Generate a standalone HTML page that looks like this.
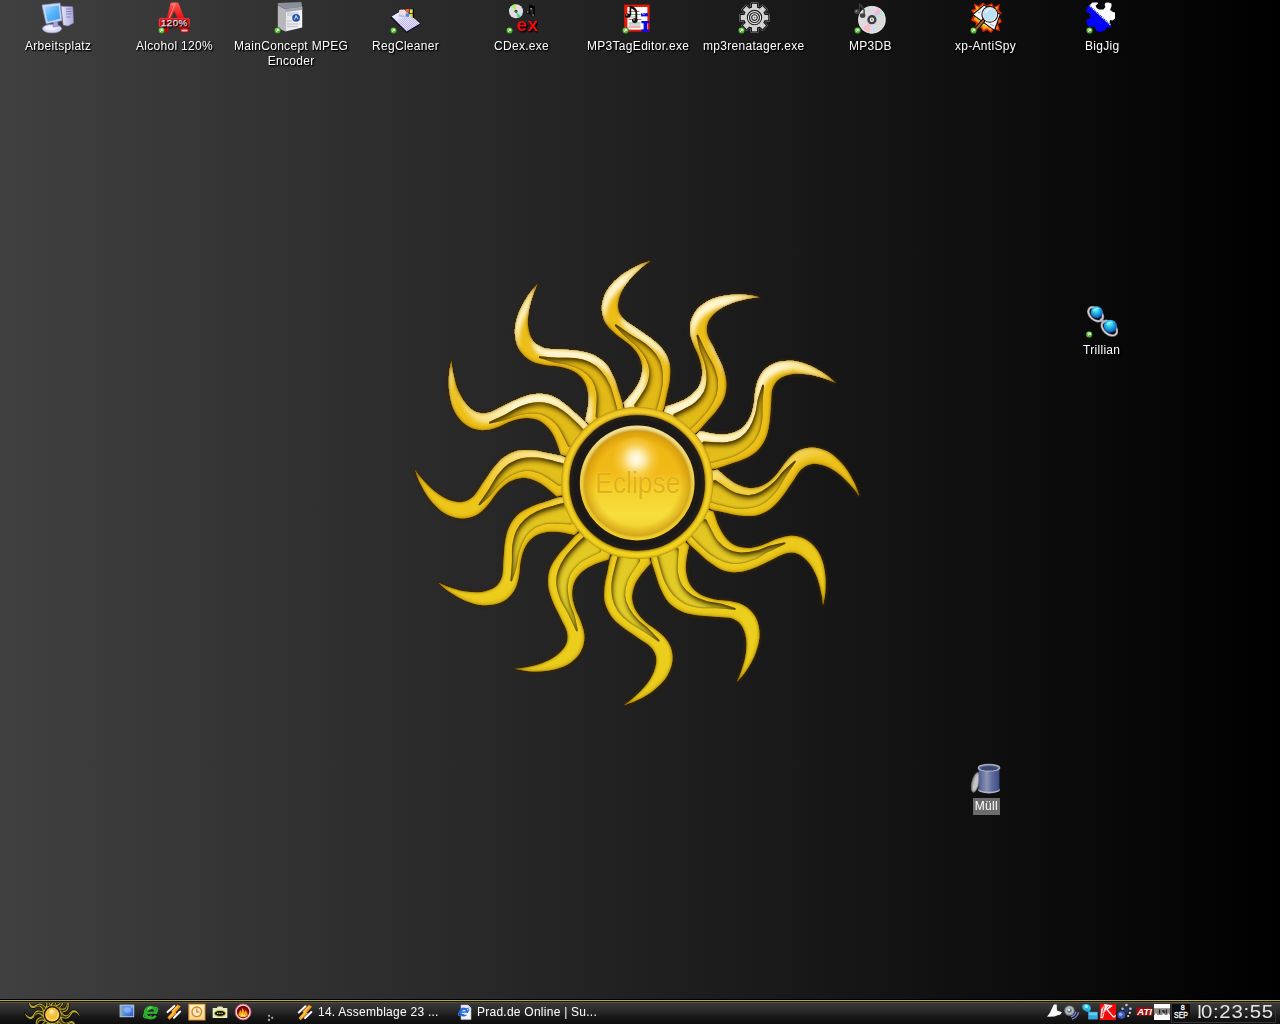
<!DOCTYPE html>
<html lang="de"><head><meta charset="utf-8"><title>Eclipse Desktop</title>
<style>
html,body{margin:0;padding:0;width:1280px;height:1024px;overflow:hidden;background:#000;}
body{position:relative;font-family:"Liberation Sans",sans-serif;font-size:12px;color:#fff;
background:linear-gradient(90deg,#404040 0px,#000 1280px);}
.sun{position:absolute;left:0;top:0;}
.ico{white-space:nowrap;letter-spacing:0.3px;position:absolute;width:116px;text-align:center;line-height:15px;font-size:12px;color:#fff;text-shadow:1px 1px 1px #000,1px 1px 2px #000;}
.ico svg{display:block;margin:0 auto 5px auto;width:32px;height:32px;}
.ico span{display:inline-block;padding:0 2px;will-change:transform;}
.ico.sel span{background:#6c6c6c;padding:1px 1.7px;margin-top:-1px;text-shadow:none;}
#taskbar{position:absolute;left:0;top:999px;width:1280px;height:25px;background:linear-gradient(#3a3840 4px,#313230 8px,#242424 14px,#181818 18px,#0f0f0f 24px);}
#taskbar .l1{position:absolute;left:0;top:0;width:100%;height:1px;background:#000;}
#taskbar .l2{position:absolute;left:0;top:1px;width:100%;height:1px;background:#b3a847;}
#taskbar .l3{position:absolute;left:0;top:2px;width:100%;height:1px;background:#15130a;}
#taskbar .l4{position:absolute;left:0;top:3px;width:100%;height:1px;background:#5a5232;}
.tb{will-change:transform;letter-spacing:0.25px;position:absolute;top:5px;height:16px;font-size:12px;line-height:16px;color:#fff;white-space:nowrap;}
.tb.clock{top:3px;left:1188.8px;font-size:18.5px;line-height:20px;letter-spacing:0.63px;color:#e6e6e6;transform:scaleX(1.1);transform-origin:0 0;}.tb.clock i{font-style:normal;position:relative;left:4px;display:inline-block;clip-path:inset(0 38% 0 41%);}
</style></head><body>
<svg class="sun" width="1280" height="1024" viewBox="0 0 1280 1024">
<defs>
<filter id="glow" x="-20%" y="-20%" width="140%" height="140%"><feGaussianBlur stdDeviation="1.5"/></filter>
<linearGradient id="rayfill" gradientUnits="userSpaceOnUse" x1="0" y1="-222" x2="0" y2="222">
<stop offset="0" stop-color="#f2c41c"/><stop offset="0.45" stop-color="#f3ca1c"/><stop offset="0.7" stop-color="#f2d620"/><stop offset="1" stop-color="#f1db22"/></linearGradient>
<linearGradient id="insetfill" gradientUnits="userSpaceOnUse" x1="0" y1="-160" x2="0" y2="160">
<stop offset="0" stop-color="#e2b412"/><stop offset="0.5" stop-color="#e2c01c"/><stop offset="1" stop-color="#e4d42c"/></linearGradient>
<radialGradient id="hlgrad" gradientUnits="userSpaceOnUse" cx="0" cy="0" r="1" gradientTransform="translate(0 -116) scale(250 158)">
<stop offset="0" stop-color="#fff7d8" stop-opacity="1"/><stop offset="0.55" stop-color="#fff6d2" stop-opacity="1"/><stop offset="0.78" stop-color="#fff0b4" stop-opacity="0.55"/><stop offset="1" stop-color="#fff0b0" stop-opacity="0"/></radialGradient>
<filter id="edge" x="-10%" y="-10%" width="120%" height="120%" color-interpolation-filters="sRGB">
<feComponentTransfer in="SourceAlpha" result="inv"><feFuncA type="table" tableValues="1 0"/></feComponentTransfer>
<feGaussianBlur in="inv" stdDeviation="1.7" result="ib"/>
<feFlood flood-color="#6e4a00" flood-opacity="1"/><feComposite in2="ib" operator="in" result="sh"/>
<feComposite in="sh" in2="SourceAlpha" operator="in" result="sh2"/>
<feMerge><feMergeNode in="SourceGraphic"/><feMergeNode in="sh2"/></feMerge>
</filter>
<filter id="hl" x="-10%" y="-10%" width="120%" height="120%" color-interpolation-filters="sRGB">
<feComponentTransfer in="SourceAlpha" result="th"><feFuncA type="discrete" tableValues="0 1 1 1 1 1 1 1 1 1 1 1 1 1 1 1 1 1 1 1 1 1 1 1 1 1 1 1 1 1 1 1 1 1 1 1 1 1 1 1"/></feComponentTransfer>
<feMorphology in="th" operator="erode" radius="1" result="er"/>
<feOffset in="er" dx="2.5" dy="8.5" result="sh"/>
<feComposite in="SourceGraphic" in2="sh" operator="out" result="e"/>
<feGaussianBlur in="e" stdDeviation="2.3" result="eb"/>
<feComposite in="eb" in2="th" operator="in"/>
</filter>
<filter id="sd" x="-10%" y="-10%" width="120%" height="120%" color-interpolation-filters="sRGB">
<feMorphology in="SourceAlpha" operator="erode" radius="1" result="er"/>
<feOffset in="er" dx="-0.6" dy="-2.6" result="sh"/>
<feComposite in="SourceGraphic" in2="sh" operator="out" result="e"/>
<feGaussianBlur in="e" stdDeviation="1.3" result="eb"/>
<feComposite in="eb" in2="SourceAlpha" operator="in"/>
</filter>
<filter id="inset" x="-10%" y="-10%" width="120%" height="120%" color-interpolation-filters="sRGB">
<feComponentTransfer in="SourceAlpha" result="inv"><feFuncA type="table" tableValues="1 0"/></feComponentTransfer>
<feGaussianBlur in="inv" stdDeviation="2.8" result="ib"/>
<feOffset in="ib" dx="1.2" dy="3" result="io"/>
<feFlood flood-color="#3c2a00" flood-opacity="1"/><feComposite in2="io" operator="in" result="sh"/>
<feComposite in="sh" in2="SourceAlpha" operator="in" result="sh2"/>
<feGaussianBlur in="inv" stdDeviation="1.2" result="ib2"/>
<feFlood flood-color="#5a4000" flood-opacity="0.8"/><feComposite in2="ib2" operator="in" result="s3"/>
<feComposite in="s3" in2="SourceAlpha" operator="in" result="s4"/>
<feMerge><feMergeNode in="SourceGraphic"/><feMergeNode in="sh2"/><feMergeNode in="s4"/></feMerge>
</filter>
<linearGradient id="ball" x1="0" y1="-52" x2="0" y2="52" gradientUnits="userSpaceOnUse">
<stop offset="0" stop-color="#efb414"/><stop offset="0.4" stop-color="#f1ba16"/><stop offset="0.56" stop-color="#f5d02a"/><stop offset="0.8" stop-color="#f7de3c"/><stop offset="1" stop-color="#f2d030"/></linearGradient>
<radialGradient id="ballsh" cx="0" cy="0" r="52.6" gradientUnits="userSpaceOnUse"><stop offset="0.8" stop-color="#c88a08" stop-opacity="0"/><stop offset="1" stop-color="#c08408" stop-opacity="0.55"/></radialGradient>
<radialGradient id="spec" cx="-1" cy="-24" r="25" gradientUnits="userSpaceOnUse">
<stop offset="0" stop-color="#fffdf0" stop-opacity="1"/><stop offset="0.3" stop-color="#fff6d0" stop-opacity="0.85"/><stop offset="0.65" stop-color="#ffe890" stop-opacity="0.35"/><stop offset="1" stop-color="#ffd84a" stop-opacity="0"/></radialGradient>
<linearGradient id="ringg" x1="0" y1="-76" x2="0" y2="76" gradientUnits="userSpaceOnUse"><stop offset="0" stop-color="#f4cc28"/><stop offset="1" stop-color="#f2d41e"/></linearGradient>
<linearGradient id="rimg" x1="0" y1="-58" x2="0" y2="58" gradientUnits="userSpaceOnUse"><stop offset="0" stop-color="#f2e2a0"/><stop offset="0.35" stop-color="#f0d45c"/><stop offset="0.7" stop-color="#eec82c"/><stop offset="1" stop-color="#f0d030"/></linearGradient>

<path id="r0" d="M-13.6 -80.3C-11.9 -82.3 -6.2 -88.3 -3.5 -92.1C-0.7 -95.9 1.4 -99.1 2.8 -103.0C4.2 -106.9 5.4 -111.3 5.1 -115.5C4.8 -119.7 3.4 -124.1 1.2 -128.0C-1.0 -131.9 -4.5 -135.5 -8.1 -138.9C-11.7 -142.3 -17.0 -145.2 -20.6 -148.3C-24.2 -151.4 -27.6 -154.3 -30.0 -157.7C-32.4 -161.1 -33.9 -164.7 -34.7 -168.6C-35.5 -172.5 -35.7 -176.7 -34.7 -181.1C-33.7 -185.5 -31.6 -190.8 -28.4 -195.2C-25.3 -199.6 -20.6 -204.0 -15.9 -207.7C-11.3 -211.3 -5.1 -214.7 -0.3 -217.1C4.5 -219.5 10.8 -221.3 13.0 -222.1C11.6 -221.0 7.9 -218.7 4.4 -215.5C0.9 -212.3 -4.6 -207.4 -8.1 -203.0C-11.6 -198.6 -14.9 -193.6 -16.7 -188.9C-18.5 -184.2 -19.6 -179.1 -19.1 -174.9C-18.6 -170.7 -16.7 -167.3 -13.6 -163.9C-10.5 -160.5 -5.1 -158.0 -0.3 -154.6C4.5 -151.2 10.9 -147.2 15.3 -143.6C19.7 -139.9 23.3 -136.9 26.2 -132.7C29.1 -128.5 31.4 -123.5 32.5 -118.6C33.5 -113.6 33.0 -108.2 32.5 -103.0C32.0 -97.8 30.3 -92.0 29.4 -87.4C28.5 -82.8 27.4 -77.6 27.0 -75.6L22.0 -64.0 L-10.0 -66.0 Z"/>
<path id="r1" d="M28.4 -76.3C30.8 -77.2 38.8 -79.6 43.1 -81.5C47.3 -83.4 50.7 -85.1 53.9 -87.8C57.1 -90.5 60.3 -93.7 62.2 -97.5C64.0 -101.2 65.0 -105.8 65.0 -110.3C65.1 -114.7 63.9 -119.6 62.4 -124.3C61.0 -129.1 57.9 -134.2 56.3 -138.7C54.7 -143.3 53.2 -147.5 52.9 -151.6C52.5 -155.7 53.0 -159.6 54.2 -163.4C55.5 -167.1 57.4 -170.9 60.5 -174.2C63.6 -177.5 68.0 -181.0 73.0 -183.3C77.9 -185.6 84.1 -187.0 90.0 -187.8C95.9 -188.7 102.9 -188.5 108.3 -188.2C113.7 -187.8 120.0 -186.2 122.3 -185.8C120.5 -185.6 116.2 -185.4 111.6 -184.4C106.9 -183.4 99.7 -181.9 94.5 -179.9C89.2 -177.8 83.9 -175.1 80.0 -171.9C76.1 -168.8 72.5 -164.9 70.9 -161.0C69.3 -157.2 69.2 -153.2 70.2 -148.7C71.2 -144.2 74.6 -139.4 77.0 -134.0C79.5 -128.7 83.1 -122.1 85.1 -116.7C87.1 -111.3 88.6 -106.9 89.0 -101.8C89.4 -96.8 89.0 -91.3 87.4 -86.5C85.9 -81.6 82.7 -77.2 79.6 -73.0C76.6 -68.7 72.2 -64.5 69.2 -61.0C66.1 -57.5 62.5 -53.5 61.2 -52.0L51.1 -44.4 L24.3 -62.2 Z"/>
<path id="r2" d="M62.7 -51.9C65.3 -51.4 73.4 -49.5 78.0 -49.0C82.7 -48.6 86.5 -48.4 90.6 -49.1C94.7 -49.8 99.1 -51.0 102.6 -53.3C106.1 -55.6 109.2 -59.1 111.5 -63.0C113.7 -66.8 115.1 -71.6 116.2 -76.5C117.4 -81.3 117.2 -87.3 118.1 -92.0C119.0 -96.7 119.8 -101.1 121.6 -104.8C123.3 -108.6 125.7 -111.7 128.7 -114.4C131.6 -117.0 135.1 -119.3 139.5 -120.6C143.8 -121.9 149.4 -122.7 154.8 -122.2C160.2 -121.7 166.4 -119.9 171.9 -117.7C177.4 -115.4 183.4 -111.8 187.9 -108.8C192.4 -105.8 197.0 -101.3 198.8 -99.8C197.2 -100.5 193.3 -102.5 188.8 -103.9C184.3 -105.4 177.4 -107.7 171.8 -108.5C166.2 -109.3 160.2 -109.7 155.2 -108.9C150.3 -108.2 145.3 -106.5 141.9 -104.0C138.6 -101.5 136.5 -98.1 135.1 -93.7C133.8 -89.3 134.3 -83.4 133.7 -77.6C133.2 -71.7 133.0 -64.2 132.0 -58.5C131.1 -52.9 130.2 -48.2 128.0 -43.7C125.8 -39.1 122.7 -34.5 119.0 -31.2C115.2 -27.8 110.2 -25.5 105.5 -23.4C100.7 -21.2 94.8 -19.7 90.4 -18.2C86.0 -16.7 80.9 -15.1 79.0 -14.4L66.4 -12.9 L52.2 -41.7 Z"/>
<path id="r3" d="M80.3 -13.6C82.3 -11.9 88.3 -6.2 92.1 -3.5C95.9 -0.7 99.1 1.4 103.0 2.8C106.9 4.2 111.3 5.4 115.5 5.1C119.7 4.8 124.1 3.4 128.0 1.2C131.9 -1.0 135.5 -4.5 138.9 -8.1C142.3 -11.7 145.2 -17.0 148.3 -20.6C151.4 -24.3 154.3 -27.7 157.7 -30.0C161.1 -32.4 164.7 -33.9 168.6 -34.7C172.5 -35.5 176.7 -35.7 181.1 -34.7C185.5 -33.7 190.8 -31.6 195.2 -28.5C199.6 -25.3 204.0 -20.6 207.7 -16.0C211.3 -11.3 214.7 -5.1 217.1 -0.3C219.5 4.5 221.3 10.8 222.1 13.0C221.0 11.6 218.7 7.9 215.5 4.4C212.3 0.9 207.4 -4.6 203.0 -8.1C198.6 -11.6 193.6 -14.9 188.9 -16.7C184.2 -18.5 179.1 -19.6 174.9 -19.1C170.7 -18.6 167.3 -16.7 163.9 -13.6C160.5 -10.5 158.0 -5.1 154.6 -0.3C151.2 4.5 147.2 10.9 143.6 15.3C139.9 19.7 136.9 23.3 132.7 26.2C128.5 29.1 123.5 31.4 118.6 32.5C113.6 33.5 108.2 33.0 103.0 32.5C97.8 32.0 92.0 30.3 87.4 29.4C82.8 28.5 77.6 27.4 75.6 27.0L64.0 22.0 L66.0 -10.0 Z"/>
<path id="r4" d="M76.3 28.4C77.2 30.8 79.6 38.8 81.5 43.1C83.4 47.3 85.1 50.7 87.8 53.9C90.5 57.1 93.7 60.3 97.5 62.2C101.2 64.0 105.8 65.0 110.3 65.0C114.7 65.1 119.6 63.9 124.3 62.4C129.1 61.0 134.2 57.9 138.7 56.3C143.3 54.7 147.5 53.2 151.6 52.9C155.7 52.5 159.6 53.0 163.4 54.2C167.1 55.5 170.9 57.4 174.2 60.5C177.5 63.6 181.0 68.0 183.3 73.0C185.6 77.9 187.0 84.1 187.8 90.0C188.7 95.9 188.5 102.9 188.2 108.3C187.8 113.7 186.2 120.0 185.8 122.3C185.6 120.5 185.4 116.2 184.4 111.6C183.4 106.9 181.9 99.7 179.9 94.5C177.8 89.2 175.1 83.9 171.9 80.0C168.8 76.1 164.9 72.5 161.0 70.9C157.2 69.3 153.2 69.2 148.7 70.2C144.2 71.2 139.4 74.6 134.0 77.0C128.7 79.5 122.1 83.1 116.7 85.1C111.3 87.1 106.9 88.6 101.8 89.0C96.8 89.4 91.3 89.0 86.5 87.4C81.6 85.9 77.2 82.7 73.0 79.6C68.7 76.6 64.5 72.2 61.0 69.2C57.5 66.1 53.5 62.5 52.0 61.2L44.4 51.1 L62.2 24.3 Z"/>
<path id="r5" d="M51.9 62.7C51.4 65.3 49.5 73.4 49.0 78.0C48.6 82.7 48.4 86.5 49.1 90.6C49.8 94.7 51.0 99.1 53.3 102.6C55.6 106.1 59.1 109.2 63.0 111.5C66.8 113.7 71.6 115.1 76.5 116.2C81.3 117.4 87.3 117.2 92.0 118.1C96.7 119.0 101.1 119.8 104.8 121.6C108.6 123.3 111.7 125.7 114.4 128.7C117.0 131.6 119.3 135.1 120.6 139.5C121.9 143.8 122.7 149.4 122.2 154.8C121.7 160.2 119.9 166.4 117.7 171.9C115.4 177.4 111.8 183.4 108.8 187.9C105.8 192.4 101.3 197.0 99.8 198.8C100.5 197.2 102.5 193.3 103.9 188.8C105.4 184.3 107.7 177.4 108.5 171.8C109.3 166.2 109.7 160.2 108.9 155.2C108.2 150.3 106.5 145.3 104.0 141.9C101.5 138.6 98.1 136.5 93.7 135.1C89.3 133.8 83.4 134.3 77.6 133.7C71.7 133.2 64.2 133.0 58.5 132.0C52.9 131.1 48.2 130.2 43.7 128.0C39.1 125.8 34.5 122.7 31.2 119.0C27.8 115.2 25.5 110.2 23.4 105.5C21.2 100.7 19.7 94.8 18.2 90.4C16.7 86.0 15.1 80.9 14.4 79.0L12.9 66.4 L41.7 52.2 Z"/>
<path id="r6" d="M13.6 80.3C11.9 82.3 6.2 88.3 3.5 92.1C0.7 95.9 -1.4 99.1 -2.8 103.0C-4.2 106.9 -5.4 111.3 -5.1 115.5C-4.8 119.7 -3.4 124.1 -1.2 128.0C1.0 131.9 4.5 135.5 8.1 138.9C11.7 142.3 17.0 145.2 20.6 148.3C24.3 151.4 27.7 154.3 30.0 157.7C32.4 161.1 33.9 164.7 34.7 168.6C35.5 172.5 35.7 176.7 34.7 181.1C33.7 185.5 31.6 190.8 28.5 195.2C25.3 199.6 20.6 204.0 16.0 207.7C11.3 211.3 5.1 214.7 0.3 217.1C-4.5 219.5 -10.8 221.3 -13.0 222.1C-11.6 221.0 -7.9 218.7 -4.4 215.5C-0.9 212.3 4.6 207.4 8.1 203.0C11.6 198.6 14.9 193.6 16.7 188.9C18.5 184.2 19.6 179.1 19.1 174.9C18.6 170.7 16.7 167.3 13.6 163.9C10.5 160.5 5.1 158.0 0.3 154.6C-4.5 151.2 -10.9 147.2 -15.3 143.6C-19.7 139.9 -23.3 136.9 -26.2 132.7C-29.1 128.5 -31.4 123.5 -32.5 118.6C-33.5 113.6 -33.0 108.2 -32.5 103.0C-32.0 97.8 -30.3 92.0 -29.4 87.4C-28.5 82.8 -27.4 77.6 -27.0 75.6L-22.0 64.0 L10.0 66.0 Z"/>
<path id="r7" d="M-28.4 76.3C-30.8 77.2 -38.8 79.6 -43.1 81.5C-47.3 83.4 -50.7 85.1 -53.9 87.8C-57.1 90.5 -60.3 93.7 -62.2 97.5C-64.0 101.2 -65.0 105.8 -65.0 110.3C-65.1 114.7 -63.9 119.6 -62.4 124.3C-61.0 129.1 -57.9 134.2 -56.3 138.7C-54.7 143.3 -53.2 147.5 -52.9 151.6C-52.5 155.7 -53.0 159.6 -54.2 163.4C-55.5 167.1 -57.4 170.9 -60.5 174.2C-63.6 177.5 -68.0 181.0 -73.0 183.3C-77.9 185.6 -84.1 187.0 -90.0 187.8C-95.9 188.7 -102.9 188.5 -108.3 188.2C-113.7 187.8 -120.0 186.2 -122.3 185.8C-120.5 185.6 -116.2 185.4 -111.6 184.4C-106.9 183.4 -99.7 181.9 -94.5 179.9C-89.2 177.8 -83.9 175.1 -80.0 171.9C-76.1 168.8 -72.5 164.9 -70.9 161.0C-69.3 157.2 -69.2 153.2 -70.2 148.7C-71.2 144.2 -74.6 139.4 -77.0 134.0C-79.5 128.7 -83.1 122.1 -85.1 116.7C-87.1 111.3 -88.6 106.9 -89.0 101.8C-89.4 96.8 -89.0 91.3 -87.4 86.5C-85.9 81.6 -82.7 77.2 -79.6 73.0C-76.6 68.7 -72.2 64.5 -69.2 61.0C-66.1 57.5 -62.5 53.5 -61.2 52.0L-51.1 44.4 L-24.3 62.2 Z"/>
<path id="r8" d="M-62.7 51.9C-65.3 51.4 -73.4 49.5 -78.0 49.0C-82.7 48.6 -86.5 48.4 -90.6 49.1C-94.7 49.8 -99.1 51.0 -102.6 53.3C-106.1 55.6 -109.2 59.1 -111.5 63.0C-113.7 66.8 -115.1 71.6 -116.2 76.5C-117.4 81.3 -117.2 87.3 -118.1 92.0C-119.0 96.7 -119.8 101.1 -121.6 104.8C-123.3 108.6 -125.7 111.7 -128.7 114.4C-131.6 117.0 -135.1 119.3 -139.5 120.6C-143.8 121.9 -149.4 122.7 -154.8 122.2C-160.2 121.7 -166.4 119.9 -171.9 117.7C-177.4 115.4 -183.4 111.8 -187.9 108.8C-192.4 105.8 -197.0 101.3 -198.8 99.8C-197.2 100.5 -193.3 102.5 -188.8 103.9C-184.3 105.4 -177.4 107.7 -171.8 108.5C-166.2 109.3 -160.2 109.7 -155.2 108.9C-150.3 108.2 -145.3 106.5 -141.9 104.0C-138.6 101.5 -136.5 98.1 -135.1 93.7C-133.8 89.3 -134.3 83.4 -133.7 77.6C-133.2 71.7 -133.0 64.2 -132.0 58.5C-131.1 52.9 -130.2 48.2 -128.0 43.7C-125.8 39.1 -122.7 34.5 -119.0 31.2C-115.2 27.8 -110.2 25.5 -105.5 23.4C-100.7 21.2 -94.8 19.7 -90.4 18.2C-86.0 16.7 -80.9 15.1 -79.0 14.4L-66.4 12.9 L-52.2 41.7 Z"/>
<path id="r9" d="M-80.3 13.6C-82.3 11.9 -88.3 6.2 -92.1 3.5C-95.9 0.7 -99.1 -1.4 -103.0 -2.8C-106.9 -4.2 -111.3 -5.4 -115.5 -5.1C-119.7 -4.8 -124.1 -3.4 -128.0 -1.2C-131.9 1.0 -135.5 4.5 -138.9 8.1C-142.3 11.7 -145.2 17.0 -148.3 20.6C-151.4 24.3 -154.3 27.7 -157.7 30.0C-161.1 32.4 -164.7 33.9 -168.6 34.7C-172.5 35.5 -176.7 35.7 -181.1 34.7C-185.5 33.7 -190.8 31.6 -195.2 28.5C-199.6 25.3 -204.0 20.6 -207.7 16.0C-211.3 11.3 -214.7 5.1 -217.1 0.3C-219.5 -4.5 -221.3 -10.8 -222.1 -13.0C-221.0 -11.6 -218.7 -7.9 -215.5 -4.4C-212.3 -0.9 -207.4 4.6 -203.0 8.1C-198.6 11.6 -193.6 14.9 -188.9 16.7C-184.2 18.5 -179.1 19.6 -174.9 19.1C-170.7 18.6 -167.3 16.7 -163.9 13.6C-160.5 10.5 -158.0 5.1 -154.6 0.3C-151.2 -4.5 -147.2 -10.9 -143.6 -15.3C-139.9 -19.7 -136.9 -23.3 -132.7 -26.2C-128.5 -29.1 -123.5 -31.4 -118.6 -32.5C-113.6 -33.5 -108.2 -33.0 -103.0 -32.5C-97.8 -32.0 -92.0 -30.3 -87.4 -29.4C-82.8 -28.5 -77.6 -27.4 -75.6 -27.0L-64.0 -22.0 L-66.0 10.0 Z"/>
<path id="r10" d="M-76.3 -28.4C-77.2 -30.8 -79.6 -38.8 -81.5 -43.1C-83.4 -47.3 -85.1 -50.7 -87.8 -53.9C-90.5 -57.1 -93.7 -60.3 -97.5 -62.2C-101.2 -64.0 -105.8 -65.0 -110.3 -65.0C-114.7 -65.1 -119.6 -63.9 -124.3 -62.4C-129.1 -61.0 -134.2 -57.9 -138.7 -56.3C-143.3 -54.7 -147.5 -53.2 -151.6 -52.9C-155.7 -52.5 -159.6 -53.0 -163.4 -54.2C-167.1 -55.5 -170.9 -57.4 -174.2 -60.5C-177.5 -63.6 -181.0 -68.0 -183.3 -73.0C-185.6 -77.9 -187.0 -84.1 -187.8 -90.0C-188.7 -95.9 -188.5 -102.9 -188.2 -108.3C-187.8 -113.7 -186.2 -120.0 -185.8 -122.3C-185.6 -120.5 -185.4 -116.2 -184.4 -111.6C-183.4 -106.9 -181.9 -99.7 -179.9 -94.5C-177.8 -89.2 -175.1 -83.9 -171.9 -80.0C-168.8 -76.1 -164.9 -72.5 -161.0 -70.9C-157.2 -69.3 -153.2 -69.2 -148.7 -70.2C-144.2 -71.2 -139.4 -74.6 -134.0 -77.0C-128.7 -79.5 -122.1 -83.1 -116.7 -85.1C-111.3 -87.1 -106.9 -88.6 -101.8 -89.0C-96.8 -89.4 -91.3 -89.0 -86.5 -87.4C-81.6 -85.9 -77.2 -82.7 -73.0 -79.6C-68.7 -76.6 -64.5 -72.2 -61.0 -69.2C-57.5 -66.1 -53.5 -62.5 -52.0 -61.2L-44.4 -51.1 L-62.2 -24.3 Z"/>
<path id="r11" d="M-51.9 -62.7C-51.4 -65.3 -49.5 -73.4 -49.0 -78.0C-48.6 -82.7 -48.4 -86.5 -49.1 -90.6C-49.8 -94.7 -51.0 -99.1 -53.3 -102.6C-55.6 -106.1 -59.1 -109.2 -63.0 -111.5C-66.8 -113.7 -71.6 -115.1 -76.5 -116.2C-81.3 -117.4 -87.3 -117.2 -92.0 -118.1C-96.7 -119.0 -101.1 -119.8 -104.8 -121.6C-108.6 -123.3 -111.7 -125.7 -114.4 -128.7C-117.0 -131.6 -119.3 -135.1 -120.6 -139.5C-121.9 -143.8 -122.7 -149.4 -122.2 -154.8C-121.7 -160.2 -119.9 -166.4 -117.7 -171.9C-115.4 -177.4 -111.8 -183.4 -108.8 -187.9C-105.8 -192.4 -101.3 -197.0 -99.8 -198.8C-100.5 -197.2 -102.5 -193.3 -103.9 -188.8C-105.4 -184.3 -107.7 -177.4 -108.5 -171.8C-109.3 -166.2 -109.7 -160.2 -108.9 -155.2C-108.2 -150.3 -106.5 -145.3 -104.0 -141.9C-101.5 -138.6 -98.1 -136.5 -93.7 -135.1C-89.3 -133.8 -83.4 -134.3 -77.6 -133.7C-71.7 -133.2 -64.2 -133.0 -58.5 -132.0C-52.9 -131.1 -48.2 -130.2 -43.7 -128.0C-39.1 -125.8 -34.5 -122.7 -31.2 -119.0C-27.8 -115.2 -25.5 -110.2 -23.4 -105.5C-21.2 -100.7 -19.7 -94.8 -18.2 -90.4C-16.7 -86.0 -15.1 -80.9 -14.4 -79.0L-12.9 -66.4 L-41.7 -52.2 Z"/>
<g id="rays"><use href="#r0"/><use href="#r1"/><use href="#r2"/><use href="#r3"/><use href="#r4"/><use href="#r5"/><use href="#r6"/><use href="#r7"/><use href="#r8"/><use href="#r9"/><use href="#r10"/><use href="#r11"/></g>
<g id="insets"><path d="M-1.9 -78.0C-0.8 -79.6 2.3 -84.0 4.4 -87.4C6.5 -90.8 9.2 -94.1 10.6 -98.3C12.0 -102.5 13.2 -108.0 13.0 -112.4C12.7 -116.8 11.3 -120.7 9.1 -124.9C6.8 -129.1 3.1 -133.8 -0.3 -137.4C-3.7 -141.0 -7.8 -143.4 -11.3 -146.8C-14.8 -150.1 -19.7 -155.9 -21.4 -157.7C-18.9 -156.0 -11.4 -150.6 -6.6 -147.5C-1.8 -144.4 3.3 -142.2 7.5 -138.9C11.7 -135.7 15.7 -131.9 18.4 -128.0C21.1 -124.1 22.8 -120.2 23.9 -115.5C24.9 -110.8 25.1 -105.1 24.7 -99.9C24.3 -94.7 22.5 -88.3 21.6 -84.2C20.6 -80.2 19.6 -77.0 19.2 -75.6L16.0 -66.0 L0.0 -68.0 Z"/><path d="M37.4 -68.5C39.0 -69.3 44.0 -71.6 47.5 -73.5C51.0 -75.4 55.0 -76.9 58.3 -79.8C61.6 -82.7 65.4 -86.9 67.4 -90.9C69.4 -94.8 70.1 -98.9 70.3 -103.6C70.5 -108.4 69.6 -114.3 68.4 -119.1C67.3 -124.0 64.9 -128.1 63.6 -132.7C62.2 -137.4 60.9 -144.9 60.3 -147.3C61.6 -144.6 65.4 -136.2 68.0 -131.0C70.6 -125.9 74.0 -121.4 75.9 -116.5C77.9 -111.6 79.5 -106.4 79.9 -101.7C80.4 -96.9 79.9 -92.7 78.4 -88.1C77.0 -83.5 74.3 -78.5 71.3 -74.2C68.4 -69.9 63.6 -65.2 60.8 -62.2C58.0 -59.1 55.5 -56.9 54.4 -55.9L46.9 -49.2 L34.0 -58.9 Z"/><path d="M66.6 -40.6C68.5 -40.5 73.9 -40.0 77.9 -39.9C81.9 -39.8 86.1 -39.1 90.4 -40.0C94.8 -40.8 100.1 -42.5 103.8 -45.0C107.5 -47.4 110.2 -50.6 112.7 -54.6C115.2 -58.6 117.4 -64.2 118.8 -69.0C120.3 -73.7 120.3 -78.4 121.4 -83.2C122.6 -87.9 125.1 -95.0 125.9 -97.4C125.6 -94.4 124.7 -85.2 124.4 -79.5C124.1 -73.7 124.8 -68.2 124.0 -63.0C123.3 -57.7 122.1 -52.4 120.1 -48.1C118.0 -43.7 115.5 -40.3 112.0 -37.1C108.4 -33.8 103.6 -30.8 98.9 -28.6C94.2 -26.3 87.7 -24.7 83.7 -23.5C79.8 -22.2 76.5 -21.6 75.1 -21.2L65.2 -19.1 L58.9 -34.0 Z"/><path d="M78.0 -1.9C79.6 -0.9 84.0 2.3 87.4 4.4C90.8 6.5 94.1 9.2 98.3 10.6C102.5 12.0 108.0 13.2 112.4 13.0C116.8 12.7 120.7 11.3 124.9 9.0C129.1 6.8 133.8 3.1 137.4 -0.3C141.0 -3.7 143.4 -7.8 146.8 -11.3C150.1 -14.8 155.9 -19.7 157.7 -21.4C156.0 -18.9 150.6 -11.4 147.5 -6.6C144.4 -1.8 142.2 3.3 138.9 7.5C135.7 11.7 131.9 15.7 128.0 18.4C124.1 21.1 120.2 22.8 115.5 23.9C110.8 24.9 105.1 25.1 99.9 24.7C94.7 24.3 88.3 22.5 84.2 21.5C80.2 20.6 77.0 19.6 75.6 19.2L66.0 16.0 L68.0 -0.0 Z"/><path d="M68.5 37.4C69.3 39.0 71.6 44.0 73.5 47.5C75.4 51.0 76.9 55.0 79.8 58.3C82.7 61.6 86.9 65.4 90.9 67.4C94.8 69.4 98.9 70.1 103.6 70.3C108.4 70.5 114.3 69.6 119.1 68.4C124.0 67.3 128.1 64.9 132.7 63.6C137.4 62.2 144.9 60.9 147.3 60.3C144.6 61.6 136.2 65.4 131.0 68.0C125.9 70.6 121.4 74.0 116.5 75.9C111.6 77.9 106.4 79.5 101.7 79.9C96.9 80.4 92.7 79.9 88.1 78.4C83.5 77.0 78.5 74.3 74.2 71.3C69.9 68.4 65.2 63.6 62.2 60.8C59.1 58.0 56.9 55.5 55.9 54.4L49.2 46.9 L58.9 34.0 Z"/><path d="M40.6 66.6C40.5 68.5 40.0 73.9 39.9 77.9C39.8 81.9 39.1 86.1 40.0 90.4C40.8 94.8 42.5 100.1 45.0 103.8C47.4 107.5 50.6 110.2 54.6 112.7C58.6 115.2 64.2 117.4 69.0 118.8C73.7 120.3 78.4 120.3 83.2 121.4C87.9 122.6 95.0 125.1 97.4 125.9C94.4 125.6 85.2 124.7 79.5 124.4C73.7 124.1 68.2 124.8 63.0 124.0C57.7 123.3 52.4 122.1 48.1 120.1C43.7 118.0 40.3 115.5 37.1 112.0C33.8 108.4 30.8 103.6 28.6 98.9C26.3 94.2 24.7 87.7 23.5 83.7C22.2 79.8 21.6 76.5 21.2 75.1L19.1 65.2 L34.0 58.9 Z"/><path d="M1.9 78.0C0.9 79.6 -2.3 84.0 -4.4 87.4C-6.5 90.8 -9.2 94.1 -10.6 98.3C-12.0 102.5 -13.2 108.0 -13.0 112.4C-12.7 116.8 -11.3 120.7 -9.0 124.9C-6.8 129.1 -3.1 133.8 0.3 137.4C3.7 141.0 7.8 143.4 11.3 146.8C14.8 150.1 19.7 155.9 21.4 157.7C18.9 156.0 11.4 150.6 6.6 147.5C1.8 144.4 -3.3 142.2 -7.5 138.9C-11.7 135.7 -15.7 131.9 -18.4 128.0C-21.1 124.1 -22.8 120.2 -23.9 115.5C-24.9 110.8 -25.1 105.1 -24.7 99.9C-24.3 94.7 -22.5 88.3 -21.5 84.2C-20.6 80.2 -19.6 77.0 -19.2 75.6L-16.0 66.0 L0.0 68.0 Z"/><path d="M-37.4 68.5C-39.0 69.3 -44.0 71.6 -47.5 73.5C-51.0 75.4 -55.0 76.9 -58.3 79.8C-61.6 82.7 -65.4 86.9 -67.4 90.9C-69.4 94.8 -70.1 98.9 -70.3 103.6C-70.5 108.4 -69.6 114.3 -68.4 119.1C-67.3 124.0 -64.9 128.1 -63.6 132.7C-62.2 137.4 -60.9 144.9 -60.3 147.3C-61.6 144.6 -65.4 136.2 -68.0 131.0C-70.6 125.9 -74.0 121.4 -75.9 116.5C-77.9 111.6 -79.5 106.4 -79.9 101.7C-80.4 96.9 -79.9 92.7 -78.4 88.1C-77.0 83.5 -74.3 78.5 -71.3 74.2C-68.4 69.9 -63.6 65.2 -60.8 62.2C-58.0 59.1 -55.5 56.9 -54.4 55.9L-46.9 49.2 L-34.0 58.9 Z"/><path d="M-66.6 40.6C-68.5 40.5 -73.9 40.0 -77.9 39.9C-81.9 39.8 -86.1 39.1 -90.4 40.0C-94.8 40.8 -100.1 42.5 -103.8 45.0C-107.5 47.4 -110.2 50.6 -112.7 54.6C-115.2 58.6 -117.4 64.2 -118.8 69.0C-120.3 73.7 -120.3 78.4 -121.4 83.2C-122.6 87.9 -125.1 95.0 -125.9 97.4C-125.6 94.4 -124.7 85.2 -124.4 79.5C-124.1 73.7 -124.8 68.2 -124.0 63.0C-123.3 57.7 -122.1 52.4 -120.1 48.1C-118.0 43.7 -115.5 40.3 -112.0 37.1C-108.4 33.8 -103.6 30.8 -98.9 28.6C-94.2 26.3 -87.7 24.7 -83.7 23.5C-79.8 22.2 -76.5 21.6 -75.1 21.2L-65.2 19.1 L-58.9 34.0 Z"/><path d="M-78.0 1.9C-79.6 0.9 -84.0 -2.3 -87.4 -4.4C-90.8 -6.5 -94.1 -9.2 -98.3 -10.6C-102.5 -12.0 -108.0 -13.2 -112.4 -13.0C-116.8 -12.7 -120.7 -11.3 -124.9 -9.0C-129.1 -6.8 -133.8 -3.1 -137.4 0.3C-141.0 3.7 -143.4 7.8 -146.8 11.3C-150.1 14.8 -155.9 19.7 -157.7 21.4C-156.0 18.9 -150.6 11.4 -147.5 6.6C-144.4 1.8 -142.2 -3.3 -138.9 -7.5C-135.7 -11.7 -131.9 -15.7 -128.0 -18.4C-124.1 -21.1 -120.2 -22.8 -115.5 -23.9C-110.8 -24.9 -105.1 -25.1 -99.9 -24.7C-94.7 -24.3 -88.3 -22.5 -84.2 -21.5C-80.2 -20.6 -77.0 -19.6 -75.6 -19.2L-66.0 -16.0 L-68.0 0.0 Z"/><path d="M-68.5 -37.4C-69.3 -39.0 -71.6 -44.0 -73.5 -47.5C-75.4 -51.0 -76.9 -55.0 -79.8 -58.3C-82.7 -61.6 -86.9 -65.4 -90.9 -67.4C-94.8 -69.4 -98.9 -70.1 -103.6 -70.3C-108.4 -70.5 -114.3 -69.6 -119.1 -68.4C-124.0 -67.3 -128.1 -64.9 -132.7 -63.6C-137.4 -62.2 -144.9 -60.9 -147.3 -60.3C-144.6 -61.6 -136.2 -65.4 -131.0 -68.0C-125.9 -70.6 -121.4 -74.0 -116.5 -75.9C-111.6 -77.9 -106.4 -79.5 -101.7 -79.9C-96.9 -80.4 -92.7 -79.9 -88.1 -78.4C-83.5 -77.0 -78.5 -74.3 -74.2 -71.3C-69.9 -68.4 -65.2 -63.6 -62.2 -60.8C-59.1 -58.0 -56.9 -55.5 -55.9 -54.4L-49.2 -46.9 L-58.9 -34.0 Z"/><path d="M-40.6 -66.6C-40.5 -68.5 -40.0 -73.9 -39.9 -77.9C-39.8 -81.9 -39.1 -86.1 -40.0 -90.4C-40.8 -94.8 -42.5 -100.1 -45.0 -103.8C-47.4 -107.5 -50.6 -110.2 -54.6 -112.7C-58.6 -115.2 -64.2 -117.4 -69.0 -118.8C-73.7 -120.3 -78.4 -120.3 -83.2 -121.4C-87.9 -122.6 -95.0 -125.1 -97.4 -125.9C-94.4 -125.6 -85.2 -124.7 -79.5 -124.4C-73.7 -124.1 -68.2 -124.8 -63.0 -124.0C-57.7 -123.3 -52.4 -122.1 -48.1 -120.1C-43.7 -118.0 -40.3 -115.5 -37.1 -112.0C-33.8 -108.4 -30.8 -103.6 -28.6 -98.9C-26.3 -94.2 -24.7 -87.7 -23.5 -83.7C-22.2 -79.8 -21.6 -76.5 -21.2 -75.1L-19.1 -65.2 L-34.0 -58.9 Z"/></g>
</defs>
<g transform="translate(637.2 483.0)">
<g filter="url(#glow)" fill="#3b2700" stroke="#3b2700" stroke-width="2.5"><use href="#rays"/><circle r="76"/></g>
<use href="#r0" fill="url(#rayfill)" filter="url(#edge)"/>
<use href="#r0" fill="#c48a00" fill-opacity="0.5" filter="url(#sd)"/>
<use href="#r0" fill="url(#hlgrad)" filter="url(#hl)"/>
<path d="M-1.9 -78.0C-0.8 -79.6 2.3 -84.0 4.4 -87.4C6.5 -90.8 9.2 -94.1 10.6 -98.3C12.0 -102.5 13.2 -108.0 13.0 -112.4C12.7 -116.8 11.3 -120.7 9.1 -124.9C6.8 -129.1 3.1 -133.8 -0.3 -137.4C-3.7 -141.0 -7.8 -143.4 -11.3 -146.8C-14.8 -150.1 -19.7 -155.9 -21.4 -157.7C-18.9 -156.0 -11.4 -150.6 -6.6 -147.5C-1.8 -144.4 3.3 -142.2 7.5 -138.9C11.7 -135.7 15.7 -131.9 18.4 -128.0C21.1 -124.1 22.8 -120.2 23.9 -115.5C24.9 -110.8 25.1 -105.1 24.7 -99.9C24.3 -94.7 22.5 -88.3 21.6 -84.2C20.6 -80.2 19.6 -77.0 19.2 -75.6L16.0 -66.0 L0.0 -68.0 Z" fill="url(#insetfill)" stroke="url(#insetfill)" stroke-width="1.8" stroke-linejoin="round" filter="url(#inset)"/>
<use href="#r1" fill="url(#rayfill)" filter="url(#edge)"/>
<use href="#r1" fill="#c48a00" fill-opacity="0.5" filter="url(#sd)"/>
<use href="#r1" fill="url(#hlgrad)" filter="url(#hl)"/>
<path d="M37.4 -68.5C39.0 -69.3 44.0 -71.6 47.5 -73.5C51.0 -75.4 55.0 -76.9 58.3 -79.8C61.6 -82.7 65.4 -86.9 67.4 -90.9C69.4 -94.8 70.1 -98.9 70.3 -103.6C70.5 -108.4 69.6 -114.3 68.4 -119.1C67.3 -124.0 64.9 -128.1 63.6 -132.7C62.2 -137.4 60.9 -144.9 60.3 -147.3C61.6 -144.6 65.4 -136.2 68.0 -131.0C70.6 -125.9 74.0 -121.4 75.9 -116.5C77.9 -111.6 79.5 -106.4 79.9 -101.7C80.4 -96.9 79.9 -92.7 78.4 -88.1C77.0 -83.5 74.3 -78.5 71.3 -74.2C68.4 -69.9 63.6 -65.2 60.8 -62.2C58.0 -59.1 55.5 -56.9 54.4 -55.9L46.9 -49.2 L34.0 -58.9 Z" fill="url(#insetfill)" stroke="url(#insetfill)" stroke-width="1.8" stroke-linejoin="round" filter="url(#inset)"/>
<use href="#r2" fill="url(#rayfill)" filter="url(#edge)"/>
<use href="#r2" fill="#c48a00" fill-opacity="0.5" filter="url(#sd)"/>
<use href="#r2" fill="url(#hlgrad)" filter="url(#hl)"/>
<path d="M66.6 -40.6C68.5 -40.5 73.9 -40.0 77.9 -39.9C81.9 -39.8 86.1 -39.1 90.4 -40.0C94.8 -40.8 100.1 -42.5 103.8 -45.0C107.5 -47.4 110.2 -50.6 112.7 -54.6C115.2 -58.6 117.4 -64.2 118.8 -69.0C120.3 -73.7 120.3 -78.4 121.4 -83.2C122.6 -87.9 125.1 -95.0 125.9 -97.4C125.6 -94.4 124.7 -85.2 124.4 -79.5C124.1 -73.7 124.8 -68.2 124.0 -63.0C123.3 -57.7 122.1 -52.4 120.1 -48.1C118.0 -43.7 115.5 -40.3 112.0 -37.1C108.4 -33.8 103.6 -30.8 98.9 -28.6C94.2 -26.3 87.7 -24.7 83.7 -23.5C79.8 -22.2 76.5 -21.6 75.1 -21.2L65.2 -19.1 L58.9 -34.0 Z" fill="url(#insetfill)" stroke="url(#insetfill)" stroke-width="1.8" stroke-linejoin="round" filter="url(#inset)"/>
<use href="#r3" fill="url(#rayfill)" filter="url(#edge)"/>
<use href="#r3" fill="#c48a00" fill-opacity="0.5" filter="url(#sd)"/>
<use href="#r3" fill="url(#hlgrad)" filter="url(#hl)"/>
<path d="M78.0 -1.9C79.6 -0.9 84.0 2.3 87.4 4.4C90.8 6.5 94.1 9.2 98.3 10.6C102.5 12.0 108.0 13.2 112.4 13.0C116.8 12.7 120.7 11.3 124.9 9.0C129.1 6.8 133.8 3.1 137.4 -0.3C141.0 -3.7 143.4 -7.8 146.8 -11.3C150.1 -14.8 155.9 -19.7 157.7 -21.4C156.0 -18.9 150.6 -11.4 147.5 -6.6C144.4 -1.8 142.2 3.3 138.9 7.5C135.7 11.7 131.9 15.7 128.0 18.4C124.1 21.1 120.2 22.8 115.5 23.9C110.8 24.9 105.1 25.1 99.9 24.7C94.7 24.3 88.3 22.5 84.2 21.5C80.2 20.6 77.0 19.6 75.6 19.2L66.0 16.0 L68.0 -0.0 Z" fill="url(#insetfill)" stroke="url(#insetfill)" stroke-width="1.8" stroke-linejoin="round" filter="url(#inset)"/>
<use href="#r4" fill="url(#rayfill)" filter="url(#edge)"/>
<use href="#r4" fill="#c48a00" fill-opacity="0.5" filter="url(#sd)"/>
<use href="#r4" fill="url(#hlgrad)" filter="url(#hl)"/>
<path d="M68.5 37.4C69.3 39.0 71.6 44.0 73.5 47.5C75.4 51.0 76.9 55.0 79.8 58.3C82.7 61.6 86.9 65.4 90.9 67.4C94.8 69.4 98.9 70.1 103.6 70.3C108.4 70.5 114.3 69.6 119.1 68.4C124.0 67.3 128.1 64.9 132.7 63.6C137.4 62.2 144.9 60.9 147.3 60.3C144.6 61.6 136.2 65.4 131.0 68.0C125.9 70.6 121.4 74.0 116.5 75.9C111.6 77.9 106.4 79.5 101.7 79.9C96.9 80.4 92.7 79.9 88.1 78.4C83.5 77.0 78.5 74.3 74.2 71.3C69.9 68.4 65.2 63.6 62.2 60.8C59.1 58.0 56.9 55.5 55.9 54.4L49.2 46.9 L58.9 34.0 Z" fill="url(#insetfill)" stroke="url(#insetfill)" stroke-width="1.8" stroke-linejoin="round" filter="url(#inset)"/>
<use href="#r5" fill="url(#rayfill)" filter="url(#edge)"/>
<use href="#r5" fill="#c48a00" fill-opacity="0.5" filter="url(#sd)"/>
<use href="#r5" fill="url(#hlgrad)" filter="url(#hl)"/>
<path d="M40.6 66.6C40.5 68.5 40.0 73.9 39.9 77.9C39.8 81.9 39.1 86.1 40.0 90.4C40.8 94.8 42.5 100.1 45.0 103.8C47.4 107.5 50.6 110.2 54.6 112.7C58.6 115.2 64.2 117.4 69.0 118.8C73.7 120.3 78.4 120.3 83.2 121.4C87.9 122.6 95.0 125.1 97.4 125.9C94.4 125.6 85.2 124.7 79.5 124.4C73.7 124.1 68.2 124.8 63.0 124.0C57.7 123.3 52.4 122.1 48.1 120.1C43.7 118.0 40.3 115.5 37.1 112.0C33.8 108.4 30.8 103.6 28.6 98.9C26.3 94.2 24.7 87.7 23.5 83.7C22.2 79.8 21.6 76.5 21.2 75.1L19.1 65.2 L34.0 58.9 Z" fill="url(#insetfill)" stroke="url(#insetfill)" stroke-width="1.8" stroke-linejoin="round" filter="url(#inset)"/>
<use href="#r6" fill="url(#rayfill)" filter="url(#edge)"/>
<use href="#r6" fill="#c48a00" fill-opacity="0.5" filter="url(#sd)"/>
<use href="#r6" fill="url(#hlgrad)" filter="url(#hl)"/>
<path d="M1.9 78.0C0.9 79.6 -2.3 84.0 -4.4 87.4C-6.5 90.8 -9.2 94.1 -10.6 98.3C-12.0 102.5 -13.2 108.0 -13.0 112.4C-12.7 116.8 -11.3 120.7 -9.0 124.9C-6.8 129.1 -3.1 133.8 0.3 137.4C3.7 141.0 7.8 143.4 11.3 146.8C14.8 150.1 19.7 155.9 21.4 157.7C18.9 156.0 11.4 150.6 6.6 147.5C1.8 144.4 -3.3 142.2 -7.5 138.9C-11.7 135.7 -15.7 131.9 -18.4 128.0C-21.1 124.1 -22.8 120.2 -23.9 115.5C-24.9 110.8 -25.1 105.1 -24.7 99.9C-24.3 94.7 -22.5 88.3 -21.5 84.2C-20.6 80.2 -19.6 77.0 -19.2 75.6L-16.0 66.0 L0.0 68.0 Z" fill="url(#insetfill)" stroke="url(#insetfill)" stroke-width="1.8" stroke-linejoin="round" filter="url(#inset)"/>
<use href="#r7" fill="url(#rayfill)" filter="url(#edge)"/>
<use href="#r7" fill="#c48a00" fill-opacity="0.5" filter="url(#sd)"/>
<use href="#r7" fill="url(#hlgrad)" filter="url(#hl)"/>
<path d="M-37.4 68.5C-39.0 69.3 -44.0 71.6 -47.5 73.5C-51.0 75.4 -55.0 76.9 -58.3 79.8C-61.6 82.7 -65.4 86.9 -67.4 90.9C-69.4 94.8 -70.1 98.9 -70.3 103.6C-70.5 108.4 -69.6 114.3 -68.4 119.1C-67.3 124.0 -64.9 128.1 -63.6 132.7C-62.2 137.4 -60.9 144.9 -60.3 147.3C-61.6 144.6 -65.4 136.2 -68.0 131.0C-70.6 125.9 -74.0 121.4 -75.9 116.5C-77.9 111.6 -79.5 106.4 -79.9 101.7C-80.4 96.9 -79.9 92.7 -78.4 88.1C-77.0 83.5 -74.3 78.5 -71.3 74.2C-68.4 69.9 -63.6 65.2 -60.8 62.2C-58.0 59.1 -55.5 56.9 -54.4 55.9L-46.9 49.2 L-34.0 58.9 Z" fill="url(#insetfill)" stroke="url(#insetfill)" stroke-width="1.8" stroke-linejoin="round" filter="url(#inset)"/>
<use href="#r8" fill="url(#rayfill)" filter="url(#edge)"/>
<use href="#r8" fill="#c48a00" fill-opacity="0.5" filter="url(#sd)"/>
<use href="#r8" fill="url(#hlgrad)" filter="url(#hl)"/>
<path d="M-66.6 40.6C-68.5 40.5 -73.9 40.0 -77.9 39.9C-81.9 39.8 -86.1 39.1 -90.4 40.0C-94.8 40.8 -100.1 42.5 -103.8 45.0C-107.5 47.4 -110.2 50.6 -112.7 54.6C-115.2 58.6 -117.4 64.2 -118.8 69.0C-120.3 73.7 -120.3 78.4 -121.4 83.2C-122.6 87.9 -125.1 95.0 -125.9 97.4C-125.6 94.4 -124.7 85.2 -124.4 79.5C-124.1 73.7 -124.8 68.2 -124.0 63.0C-123.3 57.7 -122.1 52.4 -120.1 48.1C-118.0 43.7 -115.5 40.3 -112.0 37.1C-108.4 33.8 -103.6 30.8 -98.9 28.6C-94.2 26.3 -87.7 24.7 -83.7 23.5C-79.8 22.2 -76.5 21.6 -75.1 21.2L-65.2 19.1 L-58.9 34.0 Z" fill="url(#insetfill)" stroke="url(#insetfill)" stroke-width="1.8" stroke-linejoin="round" filter="url(#inset)"/>
<use href="#r9" fill="url(#rayfill)" filter="url(#edge)"/>
<use href="#r9" fill="#c48a00" fill-opacity="0.5" filter="url(#sd)"/>
<use href="#r9" fill="url(#hlgrad)" filter="url(#hl)"/>
<path d="M-78.0 1.9C-79.6 0.9 -84.0 -2.3 -87.4 -4.4C-90.8 -6.5 -94.1 -9.2 -98.3 -10.6C-102.5 -12.0 -108.0 -13.2 -112.4 -13.0C-116.8 -12.7 -120.7 -11.3 -124.9 -9.0C-129.1 -6.8 -133.8 -3.1 -137.4 0.3C-141.0 3.7 -143.4 7.8 -146.8 11.3C-150.1 14.8 -155.9 19.7 -157.7 21.4C-156.0 18.9 -150.6 11.4 -147.5 6.6C-144.4 1.8 -142.2 -3.3 -138.9 -7.5C-135.7 -11.7 -131.9 -15.7 -128.0 -18.4C-124.1 -21.1 -120.2 -22.8 -115.5 -23.9C-110.8 -24.9 -105.1 -25.1 -99.9 -24.7C-94.7 -24.3 -88.3 -22.5 -84.2 -21.5C-80.2 -20.6 -77.0 -19.6 -75.6 -19.2L-66.0 -16.0 L-68.0 0.0 Z" fill="url(#insetfill)" stroke="url(#insetfill)" stroke-width="1.8" stroke-linejoin="round" filter="url(#inset)"/>
<use href="#r10" fill="url(#rayfill)" filter="url(#edge)"/>
<use href="#r10" fill="#c48a00" fill-opacity="0.5" filter="url(#sd)"/>
<use href="#r10" fill="url(#hlgrad)" filter="url(#hl)"/>
<path d="M-68.5 -37.4C-69.3 -39.0 -71.6 -44.0 -73.5 -47.5C-75.4 -51.0 -76.9 -55.0 -79.8 -58.3C-82.7 -61.6 -86.9 -65.4 -90.9 -67.4C-94.8 -69.4 -98.9 -70.1 -103.6 -70.3C-108.4 -70.5 -114.3 -69.6 -119.1 -68.4C-124.0 -67.3 -128.1 -64.9 -132.7 -63.6C-137.4 -62.2 -144.9 -60.9 -147.3 -60.3C-144.6 -61.6 -136.2 -65.4 -131.0 -68.0C-125.9 -70.6 -121.4 -74.0 -116.5 -75.9C-111.6 -77.9 -106.4 -79.5 -101.7 -79.9C-96.9 -80.4 -92.7 -79.9 -88.1 -78.4C-83.5 -77.0 -78.5 -74.3 -74.2 -71.3C-69.9 -68.4 -65.2 -63.6 -62.2 -60.8C-59.1 -58.0 -56.9 -55.5 -55.9 -54.4L-49.2 -46.9 L-58.9 -34.0 Z" fill="url(#insetfill)" stroke="url(#insetfill)" stroke-width="1.8" stroke-linejoin="round" filter="url(#inset)"/>
<use href="#r11" fill="url(#rayfill)" filter="url(#edge)"/>
<use href="#r11" fill="#c48a00" fill-opacity="0.5" filter="url(#sd)"/>
<use href="#r11" fill="url(#hlgrad)" filter="url(#hl)"/>
<path d="M-40.6 -66.6C-40.5 -68.5 -40.0 -73.9 -39.9 -77.9C-39.8 -81.9 -39.1 -86.1 -40.0 -90.4C-40.8 -94.8 -42.5 -100.1 -45.0 -103.8C-47.4 -107.5 -50.6 -110.2 -54.6 -112.7C-58.6 -115.2 -64.2 -117.4 -69.0 -118.8C-73.7 -120.3 -78.4 -120.3 -83.2 -121.4C-87.9 -122.6 -95.0 -125.1 -97.4 -125.9C-94.4 -125.6 -85.2 -124.7 -79.5 -124.4C-73.7 -124.1 -68.2 -124.8 -63.0 -124.0C-57.7 -123.3 -52.4 -122.1 -48.1 -120.1C-43.7 -118.0 -40.3 -115.5 -37.1 -112.0C-33.8 -108.4 -30.8 -103.6 -28.6 -98.9C-26.3 -94.2 -24.7 -87.7 -23.5 -83.7C-22.2 -79.8 -21.6 -76.5 -21.2 -75.1L-19.1 -65.2 L-34.0 -58.9 Z" fill="url(#insetfill)" stroke="url(#insetfill)" stroke-width="1.8" stroke-linejoin="round" filter="url(#inset)"/>
<circle r="71.7" fill="none" stroke="url(#ringg)" stroke-width="8.6" filter="url(#edge)"/>
<circle r="62.5" fill="none" stroke="#1a1a1d" stroke-width="10.4"/>
<circle r="66.6" fill="none" stroke="#3a2600" stroke-width="2" opacity="0.8" filter="url(#glow)"/>
<circle r="58.4" fill="none" stroke="#2a1c00" stroke-width="2" opacity="0.8" filter="url(#glow)"/>
<circle r="57.4" fill="url(#rimg)"/>
<circle r="53" fill="#b88a0c" filter="url(#glow)"/>
<circle r="52.2" fill="url(#ball)"/>
<circle r="52.2" fill="url(#ballsh)"/>
<ellipse cx="-1" cy="-24" rx="25" ry="22" fill="url(#spec)"/>
<text x="0.6" y="10.4" text-anchor="middle" font-family="'Liberation Sans',sans-serif" font-size="29" textLength="85" lengthAdjust="spacingAndGlyphs" fill="#e4b01a" stroke="#f7e05c" stroke-width="0.7" stroke-opacity="0.85" paint-order="stroke">Eclipse</text>

</g></svg><div class="ico" style="left:0px;top:2px"><svg viewBox="0 0 32 32" width="32" height="32"><defs><linearGradient id="scr" x1="0" y1="0" x2="1" y2="1"><stop offset="0" stop-color="#a8dcff"/><stop offset="0.5" stop-color="#58b4f8"/><stop offset="1" stop-color="#3c98ee"/></linearGradient>
<linearGradient id="twr" x1="0" y1="0" x2="1" y2="0"><stop offset="0" stop-color="#e6e6fa"/><stop offset="1" stop-color="#a8a8d8"/></linearGradient></defs>
<path d="M19 4.2L30.8 4.8L31.6 21L26 24L21.2 23Z" fill="url(#twr)" stroke="#7c7cb4" stroke-width="0.6"/>
<path d="M24 7h5.5M24 9.5h5.5M24 12h5.5M24.5 15h4" stroke="#5c5ca8" stroke-width="0.9" opacity="0.75"/>
<ellipse cx="10" cy="26.6" rx="9.6" ry="4.3" fill="#d8d8f4" stroke="#8c8cc0" stroke-width="0.7"/>
<ellipse cx="9.4" cy="25.8" rx="6.5" ry="2.4" fill="#f4f4ff" opacity="0.8"/>
<path d="M11.6 19.2L15.6 18.5L16.2 24.4L11 25Z" fill="#a8a4e0" stroke="#7470b8" stroke-width="0.5"/>
<path d="M-0.1 3L18 1L20 18.6L4.2 21.8Z" fill="#ccd6f6" stroke="#8e9cd0" stroke-width="0.7"/>
<path d="M2.4 5L16.7 3.4L18.2 16.7L5.5 19.8Z" fill="url(#scr)"/></svg><span>Arbeitsplatz</span></div>
<div class="ico" style="left:116px;top:2px"><svg viewBox="0 0 32 32" width="32" height="32"><defs><linearGradient id="alr" x1="0" y1="0" x2="0" y2="1"><stop offset="0" stop-color="#ff5a50"/><stop offset="0.5" stop-color="#e81418"/><stop offset="1" stop-color="#c00008"/></linearGradient></defs>
<path d="M12.6 0.8Q16.4 -0.4 20.4 0.8L31.2 28.4Q31.6 30.5 29.600 30.500L23.600 30.500L21.400 25L11 25L9.600 30.500L5.400 30.500Z M16.200 9L12.600 17H19.800Z" fill="url(#alr)" fill-rule="evenodd"/>
<path d="M13.6 2.4L17 2.2L10 19" stroke="#ff9a90" stroke-width="1.2" fill="none" opacity="0.8"/>
<rect x="0.8" y="16" width="31" height="9.2" rx="1.2" fill="#d8101a"/>
<rect x="1.4" y="16.6" width="29.8" height="8" rx="1" fill="none" stroke="#ff6a6a" stroke-width="0.7" opacity="0.7"/>
<path d="M23.5 27.5h6v2h-6z" fill="#ffd0c8" opacity="0.9"/>
<text x="16.3" y="24" text-anchor="middle" font-family="'Liberation Sans',sans-serif" font-size="8.8" textLength="26.500" lengthAdjust="spacingAndGlyphs" fill="#fff" stroke="#fff" stroke-width="0.25">120%</text><g transform="translate(3.5 28.6)"><circle r="3.6" fill="#0c3c0c" opacity="0.55"/><circle r="3" fill="#4fae2e"/><circle cx="-0.6" cy="-0.8" r="1.8" fill="#8fd860" opacity="0.8"/><path d="M-1.4 1.3L1 -1M-0.6 -1.3H1.3V0.6" stroke="#fff" stroke-width="0.9" fill="none"/></g></svg><span>Alcohol 120%</span></div>
<div class="ico" style="left:232px;top:2px"><svg viewBox="0 0 32 32" width="32" height="32"><defs><linearGradient id="mcf" x1="0" y1="0" x2="1" y2="0"><stop offset="0" stop-color="#e4e4e8"/><stop offset="1" stop-color="#f8f8fa"/></linearGradient></defs>
<path d="M3.8 3.6L11.3 6.9L11.3 29.4L3.8 26.1Z" fill="#b8b8bc"/>
<path d="M11.3 6.9L28.2 5L28.2 25.6L11.3 29.4Z" fill="url(#mcf)"/>
<path d="M3.8 0.9L27.4 0L28.2 5L11.3 6.9L3.8 3.6Z" fill="#8a9098"/>
<path d="M11.3 6.9L28.2 5L28.2 8L11.3 10Z" fill="#a0a8b4"/>
<path d="M13 11h12M13 13h6M13 19h5M13 22h13M13 24.5h11" stroke="#b4b8c4" stroke-width="0.8"/>
<circle cx="22.1" cy="15.8" r="3.9" fill="#2454a4"/><path d="M20.5 17.5L22 13.6L24 17" stroke="#dfe8ff" stroke-width="1" fill="none"/><g transform="translate(3.5 28.6)"><circle r="3.6" fill="#0c3c0c" opacity="0.55"/><circle r="3" fill="#4fae2e"/><circle cx="-0.6" cy="-0.8" r="1.8" fill="#8fd860" opacity="0.8"/><path d="M-1.4 1.3L1 -1M-0.6 -1.3H1.3V0.6" stroke="#fff" stroke-width="0.9" fill="none"/></g></svg><span>MainConcept MPEG<br>Encoder</span></div>
<div class="ico" style="left:348px;top:2px"><svg viewBox="0 0 32 32" width="32" height="32"><defs><pattern id="dith" width="2" height="2" patternUnits="userSpaceOnUse"><rect width="2" height="2" fill="#e8e4ff"/><rect width="1" height="1" fill="#b8acf0"/><rect x="1" y="1" width="1" height="1" fill="#b8acf0"/></pattern>
<linearGradient id="rgp" x1="0" y1="0" x2="0" y2="1"><stop offset="0" stop-color="#ffffff"/><stop offset="1" stop-color="#c4b8f4"/></linearGradient></defs>
<path d="M0.6 15.2L14 6.5L31 22L16.5 31Z" fill="#0a0a18"/>
<path d="M1.6 14.6L14 7.2L30 21.6L16.6 29.6Z" fill="url(#rgp)"/>
<path d="M8 18L20 13L29.2 21.4L16.8 28.8Z" fill="url(#dith)" opacity="0.75"/>
<path d="M9 8.4c2-1.6 4-1 5.5 0.2v6c-1.6-1.2-3.6-1.6-5.5-0.2z" fill="#f4d8dc"/><path d="M8.6 12.6l6 1.2v1.6l-6-1z" fill="#a8c0e8"/>
<rect x="15.6" y="7" width="3.4" height="3.6" fill="#f06428"/><rect x="19.8" y="7.4" width="3" height="3.6" fill="#e8e85a"/>
<rect x="15.6" y="11.4" width="3.4" height="3.4" fill="#3c8ce8"/><rect x="19.8" y="11.8" width="3" height="3.4" fill="#f0dc28"/>
<rect x="22.8" y="6.6" width="1" height="9.2" fill="#000"/><g transform="translate(3.5 28.6)"><circle r="3.6" fill="#0c3c0c" opacity="0.55"/><circle r="3" fill="#4fae2e"/><circle cx="-0.6" cy="-0.8" r="1.8" fill="#8fd860" opacity="0.8"/><path d="M-1.4 1.3L1 -1M-0.6 -1.3H1.3V0.6" stroke="#fff" stroke-width="0.9" fill="none"/></g></svg><span>RegCleaner</span></div>
<div class="ico" style="left:464px;top:2px"><svg viewBox="0 0 32 32" width="32" height="32"><defs><linearGradient id="cdr" x1="0" y1="0" x2="1" y2="1"><stop offset="0" stop-color="#e8f0e0"/><stop offset="0.35" stop-color="#b8f040"/><stop offset="0.5" stop-color="#f4d8f0"/><stop offset="0.7" stop-color="#58e080"/><stop offset="1" stop-color="#c0e8ff"/></linearGradient></defs>
<circle cx="10" cy="9.3" r="7" fill="#e4dce4"/>
<path d="M10 9.3L5.5 4A7 7 0 0 1 9.5 2.3Z" fill="#b8ec48"/><path d="M10 9.3L11.5 16.1A7 7 0 0 0 15 14.2Z" fill="#58d878"/><path d="M10 9.3L15 14.2A7 7 0 0 0 16.4 12Z" fill="#a8e0ff"/><path d="M10 9.3L5 4.6A7 7 0 0 0 3.6 7Z" fill="#a8f0e0"/>
<circle cx="10" cy="9.3" r="1.4" fill="#101010"/><circle cx="10" cy="9.3" r="0.5" fill="#fff"/>
<path d="M23 2.2l6 2v9.4h-1.6V7l-3-1v6.6H23z" fill="#050505"/><ellipse cx="22" cy="10.4" rx="1.8" ry="1.3" fill="#050505"/><ellipse cx="27" cy="13" rx="1.8" ry="1.3" fill="#050505"/>
<path d="M21 9.6h1.4v1h-1.4zM26.4 12.4h1.4v1h-1.4zM24.6 6h1v1.6h-1z" fill="#e8e8e8"/>
<text x="21.5" y="29.2" text-anchor="middle" font-family="'Liberation Sans',sans-serif" font-weight="bold" font-size="19" textLength="22" lengthAdjust="spacingAndGlyphs" fill="#f00810">ex</text><g transform="translate(3.5 28.6)"><circle r="3.6" fill="#0c3c0c" opacity="0.55"/><circle r="3" fill="#4fae2e"/><circle cx="-0.6" cy="-0.8" r="1.8" fill="#8fd860" opacity="0.8"/><path d="M-1.4 1.3L1 -1M-0.6 -1.3H1.3V0.6" stroke="#fff" stroke-width="0.9" fill="none"/></g></svg><span>CDex.exe</span></div>
<div class="ico" style="left:580px;top:2px"><svg viewBox="0 0 32 32" width="32" height="32"><g transform="translate(-8 0)"><rect x="10.6" y="2.6" width="25.4" height="27" fill="#e81808" transform="translate(-0.4 0)"/>
<rect x="13.4" y="5" width="20" height="22.6" fill="#fff"/>
<path d="M14.5 9.5h11M14.5 17.5h13M14.5 25h12" stroke="#e06060" stroke-width="1"/><path d="M14.5 12.5h12M14.5 21h12" stroke="#70b070" stroke-width="1"/><path d="M14.5 15h9M14.5 23h12" stroke="#a0a0a0" stroke-width="0.9"/>
<path d="M27 11.2h7v3.2h-7z" fill="#1010e0"/><path d="M28 11.6l2.4 0.8" stroke="#d8d8ff" stroke-width="0.9"/>
<path d="M27.4 19h8v2.2h-2.4v6.4h2.4v2.2h-8v-2.2h2.2v-6.4h-2.2z" fill="#0808f0"/>
<path d="M15.6 3.4c3 0.2 6.6 2.4 7.6 5.6v9.8h-1.8V9.6c-1-2-3.2-3-4.2-3.2v7.2h-1.6z" fill="#0a0a0a"/>
<ellipse cx="13.8" cy="13.6" rx="2.8" ry="2.2" fill="#0a0a0a"/><ellipse cx="20.8" cy="18.6" rx="2.8" ry="2.3" fill="#0a0a0a"/>
<circle cx="12.8" cy="13" r="0.8" fill="#c8c8c8"/><circle cx="20" cy="18" r="0.8" fill="#c8c8c8"/></g><g transform="translate(3.5 28.6)"><circle r="3.6" fill="#0c3c0c" opacity="0.55"/><circle r="3" fill="#4fae2e"/><circle cx="-0.6" cy="-0.8" r="1.8" fill="#8fd860" opacity="0.8"/><path d="M-1.4 1.3L1 -1M-0.6 -1.3H1.3V0.6" stroke="#fff" stroke-width="0.9" fill="none"/></g></svg><span>MP3TagEditor.exe</span></div>
<div class="ico" style="left:696px;top:2px"><svg viewBox="0 0 32 32" width="32" height="32"><g transform="translate(16.5 15.6)"><g fill="#0a0a0a" stroke="#909090" stroke-width="3" stroke-linejoin="round"><rect x="-2.6" y="-13.8" width="5.2" height="6" transform="rotate(0)"/><rect x="-2.6" y="-13.8" width="5.2" height="6" transform="rotate(45)"/><rect x="-2.6" y="-13.8" width="5.2" height="6" transform="rotate(90)"/><rect x="-2.6" y="-13.8" width="5.2" height="6" transform="rotate(135)"/><rect x="-2.6" y="-13.8" width="5.2" height="6" transform="rotate(180)"/><rect x="-2.6" y="-13.8" width="5.2" height="6" transform="rotate(225)"/><rect x="-2.6" y="-13.8" width="5.2" height="6" transform="rotate(270)"/><rect x="-2.6" y="-13.8" width="5.2" height="6" transform="rotate(315)"/><circle r="10"/></g><g fill="#0a0a0a" stroke="#0a0a0a" stroke-width="2" stroke-linejoin="round"><rect x="-2.6" y="-13.8" width="5.2" height="6" transform="rotate(0)"/><rect x="-2.6" y="-13.8" width="5.2" height="6" transform="rotate(45)"/><rect x="-2.6" y="-13.8" width="5.2" height="6" transform="rotate(90)"/><rect x="-2.6" y="-13.8" width="5.2" height="6" transform="rotate(135)"/><rect x="-2.6" y="-13.8" width="5.2" height="6" transform="rotate(180)"/><rect x="-2.6" y="-13.8" width="5.2" height="6" transform="rotate(225)"/><rect x="-2.6" y="-13.8" width="5.2" height="6" transform="rotate(270)"/><rect x="-2.6" y="-13.8" width="5.2" height="6" transform="rotate(315)"/><circle r="10.4"/></g><g fill="#d2d2d2"><rect x="-2.6" y="-13.8" width="5.2" height="6" transform="rotate(0)"/><rect x="-2.6" y="-13.8" width="5.2" height="6" transform="rotate(45)"/><rect x="-2.6" y="-13.8" width="5.2" height="6" transform="rotate(90)"/><rect x="-2.6" y="-13.8" width="5.2" height="6" transform="rotate(135)"/><rect x="-2.6" y="-13.8" width="5.2" height="6" transform="rotate(180)"/><rect x="-2.6" y="-13.8" width="5.2" height="6" transform="rotate(225)"/><rect x="-2.6" y="-13.8" width="5.2" height="6" transform="rotate(270)"/><rect x="-2.6" y="-13.8" width="5.2" height="6" transform="rotate(315)"/><circle r="10.4"/></g><circle r="7.8" fill="#f2f2f2"/><circle r="7.2" fill="none" stroke="#1a1a1a" stroke-width="1.1"/><circle r="5" fill="none" stroke="#2a2a2a" stroke-width="1.3"/><circle r="2.8" fill="none" stroke="#1a1a1a" stroke-width="1.1"/><circle r="1" fill="#707070"/></g><g transform="translate(3.5 28.6)"><circle r="3.6" fill="#0c3c0c" opacity="0.55"/><circle r="3" fill="#4fae2e"/><circle cx="-0.6" cy="-0.8" r="1.8" fill="#8fd860" opacity="0.8"/><path d="M-1.4 1.3L1 -1M-0.6 -1.3H1.3V0.6" stroke="#fff" stroke-width="0.9" fill="none"/></g></svg><span>mp3renatager.exe</span></div>
<div class="ico" style="left:812px;top:2px"><svg viewBox="0 0 32 32" width="32" height="32"><circle cx="17.9" cy="17.7" r="13.8" fill="#dcdadc"/>
<path d="M17.9 17.7L24 5.4A13.8 13.8 0 0 1 28.6 9Z" fill="#f0b8e0"/><path d="M17.9 17.7L28.6 9A13.8 13.8 0 0 1 31 13.4Z" fill="#b8e8d4"/>
<path d="M17.9 17.7L11 29.6A13.8 13.8 0 0 0 15.6 31.3Z" fill="#f4c4b0"/><path d="M17.9 17.7L8 27.4A13.8 13.8 0 0 0 11 29.6Z" fill="#f0b8d8"/><path d="M17.9 17.7L15.6 31.3A13.8 13.8 0 0 0 21 31.1Z" fill="#d4dcf8"/>
<circle cx="17.9" cy="17.7" r="13.3" fill="none" stroke="#f4f4f4" stroke-width="0.8" opacity="0.6"/>
<circle cx="17.9" cy="17.7" r="4.6" fill="#3a3c40"/><circle cx="17.9" cy="17.7" r="2.2" fill="#f4f4f4"/><circle cx="17.9" cy="17.7" r="0.9" fill="#606060"/>
<path d="M4.8 0.4c2 1.6 5.6 4.4 6 8v5.4h-1.4V8.6C8.6 6.2 6.6 4.6 5.9 4.2v5.4H4.8z" fill="#3c3c3c"/>
<ellipse cx="3" cy="9.6" rx="2.8" ry="2.3" fill="#4a4a4a"/><ellipse cx="8.6" cy="13.6" rx="2.8" ry="2.3" fill="#404040"/><circle cx="2.4" cy="9" r="0.9" fill="#8a8a8a"/><g transform="translate(3.5 28.6)"><circle r="3.6" fill="#0c3c0c" opacity="0.55"/><circle r="3" fill="#4fae2e"/><circle cx="-0.6" cy="-0.8" r="1.8" fill="#8fd860" opacity="0.8"/><path d="M-1.4 1.3L1 -1M-0.6 -1.3H1.3V0.6" stroke="#fff" stroke-width="0.9" fill="none"/></g></svg><span>MP3DB</span></div>
<div class="ico" style="left:928px;top:2px"><svg viewBox="0 0 32 32" width="32" height="32"><path d="M4 1.5L9 4L13 0.5L17 3.6L22 1L24 5L30 2L28.6 8L32 11L29.6 15L32 20L28 22L30 29L24 27.6L21 31L17 28L13 30L11 26L5 27L6 21L1 18L4 13L1 8L5 7Z" fill="#e82808"/>
<path d="M5.4 3.6L9.4 5.8L13 2.6L17 5.4L21.4 3L23.4 6.6L28 4.6L27 9L30 11.6L27.8 15L29.8 19.2L26.4 21L28 27L23.6 25.6L20.6 28.8L17 26L13.6 27.8L12 24.4L7 25L8 20.4L3.6 17.6L6 13.4L3.4 9L6.4 8Z" fill="#f8a818"/>
<path d="M8 7L12 8L15 5L18 8L24 6L25 10L27.6 12L26 16L27 20L23.6 20.6L24 25L20 23.6L17 25L14 23L9 23L10 19L6 16L8 13L6 9Z" fill="#fff040"/>
<path d="M2 12.4L14 2.4L31 12L25 29L18 24.6Z" fill="#0a0a0a"/>
<path d="M3.6 12.6L14.2 3.8L29.6 12.4L24.2 27.4L18.4 23.6Z" fill="#f4f4f8"/>
<path d="M8 11l3-1.2M20 22l4 2" stroke="#a0a8c0" stroke-width="1"/>
<path d="M13.4 18.6L5.8 27.4" stroke="#0a0a0a" stroke-width="4" stroke-linecap="round"/><path d="M13.4 18.6L5.8 27.4" stroke="#a86428" stroke-width="2" stroke-linecap="round"/>
<circle cx="19.8" cy="12.4" r="8.4" fill="#0a0a0a"/><circle cx="19.8" cy="12.4" r="7.4" fill="#e8e8f0"/><circle cx="19.8" cy="12.4" r="6.4" fill="#bce0f4"/>
<path d="M15.6 10.4a5 5 0 0 1 6-3" stroke="#f4fcff" stroke-width="1.4" fill="none" opacity="0.8"/><g transform="translate(3.5 28.6)"><circle r="3.6" fill="#0c3c0c" opacity="0.55"/><circle r="3" fill="#4fae2e"/><circle cx="-0.6" cy="-0.8" r="1.8" fill="#8fd860" opacity="0.8"/><path d="M-1.4 1.3L1 -1M-0.6 -1.3H1.3V0.6" stroke="#fff" stroke-width="0.9" fill="none"/></g></svg><span>xp-AntiSpy</span></div>
<div class="ico" style="left:1044px;top:2px"><svg viewBox="0 0 32 32" width="32" height="32"><path d="M3.5 3.6L6.4 0.6L11.4 0.6L12 1.6L9.6 3.8L10.6 6L13 7.4L17.4 7.4L19.4 5L18.6 2.4L19.6 0.8L22.6 0.6L25.4 1.6L25.6 4L24 8L27 10L29 10.4L29 16.6L26.6 18.6L24 18L23.6 20L24.6 23Z" fill="#fff"/>
<path d="M3.5 3.6L24.6 23L25.6 25.4L20 25.6L19.4 28.6L14 30L10.4 29L9 24.6L6.4 25L2 24L0.4 21L0.6 17.4L3 16.4L4.4 16.2L4 11.6L0.4 10.4L0.4 6Z" fill="#0404f4"/>
<path d="M3.5 3.6L24.6 23" stroke="#fff" stroke-width="1.1"/><path d="M3.5 3.6L24.6 23" stroke="#1010c0" stroke-width="1.1" stroke-dasharray="1 1"/><g transform="translate(3.5 28.6)"><circle r="3.6" fill="#0c3c0c" opacity="0.55"/><circle r="3" fill="#4fae2e"/><circle cx="-0.6" cy="-0.8" r="1.8" fill="#8fd860" opacity="0.8"/><path d="M-1.4 1.3L1 -1M-0.6 -1.3H1.3V0.6" stroke="#fff" stroke-width="0.9" fill="none"/></g></svg><span>BigJig</span></div>
<div class="ico" style="left:1044px;top:306px"><svg viewBox="0 0 32 32" width="32" height="32"><defs><radialGradient id="tg" cx="0.42" cy="0.32" r="0.75"><stop offset="0" stop-color="#68f4ff"/><stop offset="0.45" stop-color="#1cb0e4"/><stop offset="1" stop-color="#0a3ca8"/></radialGradient></defs>
<ellipse cx="9.6" cy="8.2" rx="8.4" ry="5.6" transform="rotate(42 9.6 8.2)" fill="none" stroke="#7c7c84" stroke-width="2.6"/>
<ellipse cx="9.6" cy="8.2" rx="8.4" ry="5.6" transform="rotate(42 9.6 8.2)" fill="none" stroke="#d8d8dc" stroke-width="1.2"/>
<ellipse cx="23.4" cy="22.2" rx="8.8" ry="5.8" transform="rotate(42 23.4 22.2)" fill="none" stroke="#7c7c84" stroke-width="2.6"/>
<ellipse cx="23.4" cy="22.2" rx="8.8" ry="5.8" transform="rotate(42 23.4 22.2)" fill="none" stroke="#d8d8dc" stroke-width="1.2"/>
<path d="M14.5 12.5L18 17" stroke="#b4b4bc" stroke-width="2.4"/>
<circle cx="10.8" cy="6.2" r="6" fill="url(#tg)"/><circle cx="24.4" cy="20.2" r="6.5" fill="url(#tg)"/>
<path d="M7.4 5a4.2 4.2 0 0 1 5.6-2.200" stroke="#d0ffff" stroke-width="1.1" fill="none" opacity="0.7"/><path d="M21 19a4.400 4.400 0 0 1 5.800-2.400" stroke="#d0ffff" stroke-width="1.1" fill="none" opacity="0.7"/><g transform="translate(3.2 28.4)"><circle r="3.6" fill="#0c3c0c" opacity="0.55"/><circle r="3" fill="#4fae2e"/><circle cx="-0.6" cy="-0.8" r="1.8" fill="#8fd860" opacity="0.8"/><path d="M-1.4 1.3L1 -1M-0.6 -1.3H1.3V0.6" stroke="#fff" stroke-width="0.9" fill="none"/></g></svg><span>Trillian</span></div>
<div class="ico sel" style="left:928px;top:762px"><svg viewBox="0 0 32 32" width="32" height="32"><defs><linearGradient id="can" x1="0" y1="0" x2="1" y2="0"><stop offset="0" stop-color="#4c5c8c"/><stop offset="0.4" stop-color="#8c94b4"/><stop offset="0.65" stop-color="#5c6a9c"/><stop offset="1" stop-color="#3e4c84"/></linearGradient></defs>
<ellipse cx="5.6" cy="20.4" rx="3.6" ry="10.2" fill="#a4a4a8" stroke="#6c6c70" stroke-width="0.8" transform="rotate(14 5.6 20.4)"/>
<ellipse cx="6" cy="20.6" rx="2.2" ry="8.4" fill="#c4c4c8" transform="rotate(14 6 20.6)"/>
<path d="M8.6 5.600V27a10.400 3.200 0 0 0 20.800 0V5.600Z" fill="url(#can)"/>
<path d="M8 26.2a10.9 3.6 0 0 0 22 0v1.6a10.9 3.6 0 0 1 -22 0z" fill="#b4b8cc"/>
<ellipse cx="19" cy="5.800" rx="10.600" ry="3.300" fill="#5a6488" stroke="#a8acc0" stroke-width="1.500"/>
<ellipse cx="19" cy="6.400" rx="8.600" ry="2.100" fill="#3c4870"/></svg><span>Müll</span></div>
<div id="taskbar"><div class="l1"></div><div class="l2"></div><div class="l3"></div><div class="l4"></div>
<svg width="1280" height="25" viewBox="0 999 1280 25" style="position:absolute;left:0;top:0"><defs><clipPath id="tbclip"><rect x="0" y="1003" width="1280" height="21"/></clipPath>
<radialGradient id="mball" cx="0.5" cy="0.5" r="0.5" fx="0.45" fy="0.2"><stop offset="0" stop-color="#fffae0"/><stop offset="0.4" stop-color="#f8cc50"/><stop offset="0.7" stop-color="#f4b830"/><stop offset="1" stop-color="#fbe47c"/></radialGradient>
<linearGradient id="dsk" x1="0" y1="0" x2="1" y2="1"><stop offset="0" stop-color="#6c9cf0"/><stop offset="0.45" stop-color="#5c94f0"/><stop offset="1" stop-color="#2c54c8"/></linearGradient>
<linearGradient id="clk" x1="0" y1="0" x2="0" y2="1"><stop offset="0" stop-color="#fff0d0"/><stop offset="1" stop-color="#f9d090"/></linearGradient>
<radialGradient id="nero" cx="0.5" cy="0.6" r="0.55"><stop offset="0" stop-color="#c81818"/><stop offset="1" stop-color="#6a0808"/></radialGradient></defs><g clip-path="url(#tbclip)"><g transform="translate(52.2 1014.6) scale(0.1235)"><use href="#rays" fill="#1a1200" stroke="#1a1200" stroke-width="14" stroke-linejoin="round"/><use href="#rays" fill="#b9a936"/><use href="#insets" fill="#3a2e08"/><circle r="72" fill="none" stroke="#b9a936" stroke-width="9"/><circle r="68" fill="#2a1c04"/></g><circle cx="52.2" cy="1014.6" r="8.4" fill="#2a1600"/><circle cx="52.2" cy="1014.6" r="7" fill="url(#mball)"/></g><rect x="119.6" y="1004.6" width="14.6" height="12.6" fill="#b8c4d0"/><rect x="120.6" y="1005.6" width="12.6" height="10.6" fill="url(#dsk)"/><rect x="120.6" y="1005.6" width="2" height="10.6" fill="#8cb088" opacity="0.8"/><rect x="131" y="1006" width="1.6" height="1.600" fill="#c8d8f0" opacity="0.700"/><ellipse cx="127.600" cy="1010" rx="3.600" ry="2.800" fill="#a4c8fc" opacity="0.550"/><g transform="translate(150.6 1012.6)"><ellipse rx="8" ry="3.4" fill="none" stroke="#34b034" stroke-width="1.5" transform="rotate(-32)"/><circle r="5.3" fill="none" stroke="#30b030" stroke-width="3"/><rect x="-4.6" y="-0.9" width="9.6" height="2.2" fill="#30b030"/><path d="M1 1.3h6v3h-6z" fill="#181818"/><path d="M5.2 3.2a5.4 5.4 0 0 1 -3 2" stroke="#30b030" stroke-width="2.6" fill="none"/><path d="M-3 -3.4a4 4 0 0 1 4-1.4" stroke="#8ce88c" stroke-width="1" fill="none"/></g><g transform="translate(167 1004.8) scale(1.0)"><path d="M7 0L14 7L7 14.2L0 7.2Z" fill="#181814"/><path d="M0.6 7.3L7.3 1.1" stroke="#fafafa" stroke-width="2.1" stroke-linecap="round"/><path d="M6.9 12.9L13.1 6.8" stroke="#fafafa" stroke-width="2.1" stroke-linecap="round"/>
<path d="M10.8 -0.4L13.8 1.6L8.6 7.6L9.8 8.4L2.4 15L0.4 12.8L5.2 7.2L4.2 6.2Z" fill="#f39a1c"/><path d="M10.6 1.4L5.8 6.6L7 7.4L2.4 12.6" stroke="#fbc85c" stroke-width="1.3" fill="none"/></g><rect x="188.4" y="1003.8" width="17" height="16.6" fill="#f2ac48"/><rect x="189.6" y="1005" width="14.6" height="14.2" fill="url(#clk)"/><circle cx="196.8" cy="1011.8" r="4.8" fill="#fbe9c4" stroke="#c48820" stroke-width="1.3"/><path d="M196.8 1008.6V1012H199.4" stroke="#b87818" stroke-width="1.1" fill="none"/><path d="M212.8 1008h4l1-1.6h4.4l1 1.6h4v10h-14.4z" fill="#e6e6c2"/><rect x="212.8" y="1008.4" width="14.4" height="9.6" fill="#ecebc8"/><ellipse cx="220" cy="1013.4" rx="5.6" ry="3" fill="#10100c" stroke="#c8c83c" stroke-width="1"/><path d="M217 1013.4h6" stroke="#d8d850" stroke-width="1.4" stroke-dasharray="1.4 0.8"/><circle cx="243.1" cy="1012" r="7.9" fill="#f8d8dc"/><circle cx="243.1" cy="1012" r="7.9" fill="none" stroke="#e85070" stroke-width="0.8"/><circle cx="243.1" cy="1012" r="6.2" fill="url(#nero)"/><path d="M238.4 1015.6c0-3 1.4-3.6 1.8-5.6c1 1 1.2 2 1.2 2.8c0.8-1.6 0.8-3.4 0.4-4.8c1.8 1.2 2.6 3.2 2.6 4.6c0.6-0.6 1-1.6 1-2.6c1.4 1.6 2.4 3.6 2.4 5.6a5.4 3 0 0 1 -9.4 0z" fill="#f8a018"/><path d="M240.6 1016.6c0-1.6 1-2.4 1.6-3.6c0.8 0.8 1.2 1.6 1.2 2.4c0.6-0.4 0.8-1 0.8-1.6c0.8 0.8 1.4 1.8 1.4 2.8z" fill="#fff060"/><circle cx="269" cy="1015.8" r="1.15" fill="#ababab"/><circle cx="272.2" cy="1017.8" r="1.15" fill="#ababab"/><circle cx="269" cy="1020" r="1.15" fill="#ababab"/><g transform="translate(298.2 1005.2) scale(1.0)"><path d="M7 0L14 7L7 14.2L0 7.2Z" fill="#181814"/><path d="M0.6 7.3L7.3 1.1" stroke="#fafafa" stroke-width="2.1" stroke-linecap="round"/><path d="M6.9 12.9L13.1 6.8" stroke="#fafafa" stroke-width="2.1" stroke-linecap="round"/>
<path d="M10.8 -0.4L13.8 1.6L8.6 7.6L9.8 8.4L2.4 15L0.4 12.8L5.2 7.2L4.2 6.2Z" fill="#f39a1c"/><path d="M10.6 1.4L5.8 6.6L7 7.4L2.4 12.6" stroke="#fbc85c" stroke-width="1.3" fill="none"/></g><path d="M461 1005h7l3 3v11.6h-10z" fill="#f4f4f8" stroke="#b0b4c8" stroke-width="0.6"/><path d="M468 1005v3h3" fill="#d0d4e4"/><g transform="translate(463.6 1012)"><ellipse rx="5.8" ry="2.4" fill="none" stroke="#3c7ce8" stroke-width="1.1" transform="rotate(-30)"/><circle r="3.4" fill="none" stroke="#2468e0" stroke-width="2.1"/><rect x="-3" y="-0.7" width="6.4" height="1.5" fill="#2468e0"/><rect x="0.6" y="0.8" width="4" height="2" fill="#f4f4f8"/></g><path d="M1047 1016.8L1050.1 1012.5L1051.4 1009.4L1053.9 1004.4L1056.700 1004.400L1057 1010.600L1062 1012.200L1060.100 1014.700L1057.600 1015.300L1054.500 1016.400Z" fill="#fafafa"/><g transform="translate(1069.5 1010.6)"><circle r="5.2" fill="#7c8088"/><circle r="4" fill="#b8bcc4"/><circle r="2.4" fill="#70747c"/><circle cx="-0.6" cy="-0.8" r="1.3" fill="#e4e8ec"/><path d="M2.6 8.6a10 10 0 0 0 6.600-7M1.400 6.200a7 7 0 0 0 5-5.200" stroke="#8088e0" stroke-width="1.300" fill="none"/></g><path d="M1082.400 1006.800a4.400 3 20 1 1 8.400 1.600a4.400 3 20 1 1 -8.400-1.600z" fill="#2cc0e8"/><circle cx="1086.400" cy="1006.400" r="1.700" fill="#9cf0ff"/><path d="M1085 1009.500l5 3" stroke="#2c9cd0" stroke-width="1.600"/><rect x="1088.200" y="1011.800" width="9.600" height="7.600" fill="#38a8dc"/><rect x="1089" y="1012.600" width="8" height="2.600" fill="#68ccf0"/><rect x="1099.800" y="1003.800" width="16.200" height="16.200" fill="#f20a0a"/><path d="M1100.400 1018.200L1101.200 1009L1104.600 1004.800L1111.600 1005.800L1107.600 1008.200L1104.600 1012.600L1103 1018.200Z" fill="#fbe4e4"/><path d="M1104.600 1004.800L1101.800 1017M1108.600 1006.200L1103.600 1014" stroke="#f23030" stroke-width="0.900"/><path d="M1104.600 1004.800L1111.800 1005.800L1106.800 1009.400L1113 1016.400q1.600 1.400 2.200-0.800" stroke="#fff" stroke-width="1.300" fill="none" stroke-linejoin="round" stroke-linecap="round"/><circle cx="1121.400" cy="1015" r="3.800" fill="#3c58c4"/><circle cx="1120.600" cy="1014.200" r="1.800" fill="#8ca8f4"/><circle cx="1126.400" cy="1005" r="1.300" fill="#b8c8f8"/><circle cx="1122.600" cy="1008.800" r="1.300" fill="#a8bcf4"/><circle cx="1130.400" cy="1008.800" r="1.300" fill="#b8c8f8"/><circle cx="1129.800" cy="1012.800" r="1.100" fill="#e8ecfc"/><circle cx="1128.200" cy="1016" r="1.100" fill="#dce4fc"/><circle cx="1126" cy="1010.600" r="2.400" fill="#2c3c90" opacity="0.700"/><rect x="1136.400" y="1007.400" width="16" height="8.200" fill="#a00c0c"/><text x="1144.600" y="1015" text-anchor="middle" font-family="'Liberation Sans',sans-serif" font-weight="bold" font-style="italic" font-size="8.600" textLength="14.600" lengthAdjust="spacingAndGlyphs" fill="#fff">ATI</text><rect x="1154" y="1004" width="16" height="16" fill="#fafafa"/><rect x="1154" y="1008.200" width="16" height="6.800" fill="#8c8888"/><path d="M1159.600 1009.400v4.400M1162 1011h2v2.800M1166.400 1009.400v4.400" stroke="#1c1c1c" stroke-width="1.300" fill="none"/><path d="M1155 1013.400h1.800v1.600h-1.800zM1162.600 1013.400h1.800v1.600h-1.800zM1167.600 1013.400h1.800v1.600h-1.800z" fill="#fff"/><rect x="1172" y="1004" width="18" height="16" fill="#0d0d0d"/><text x="1182.800" y="1010.400" text-anchor="middle" font-family="'Liberation Sans',sans-serif" font-size="7.200" fill="#fff" stroke="#fff" stroke-width="0.300">8</text><text x="1181" y="1018.200" text-anchor="middle" font-family="'Liberation Sans',sans-serif" font-size="8.400" textLength="14" lengthAdjust="spacingAndGlyphs" fill="#fff" stroke="#fff" stroke-width="0.300">SEP</text><path d="M1171.500 1003.500V1022.500H1275.500V1003.500" stroke="#363636" stroke-width="1" fill="none"/></svg>
<div class="tb" style="left:318px">14. Assemblage 23 ...</div>
<div class="tb" style="left:477px">Prad.de Online | Su...</div>
<div class="tb clock"><i>1</i>0:23:55</div>
</div>

</body></html>
